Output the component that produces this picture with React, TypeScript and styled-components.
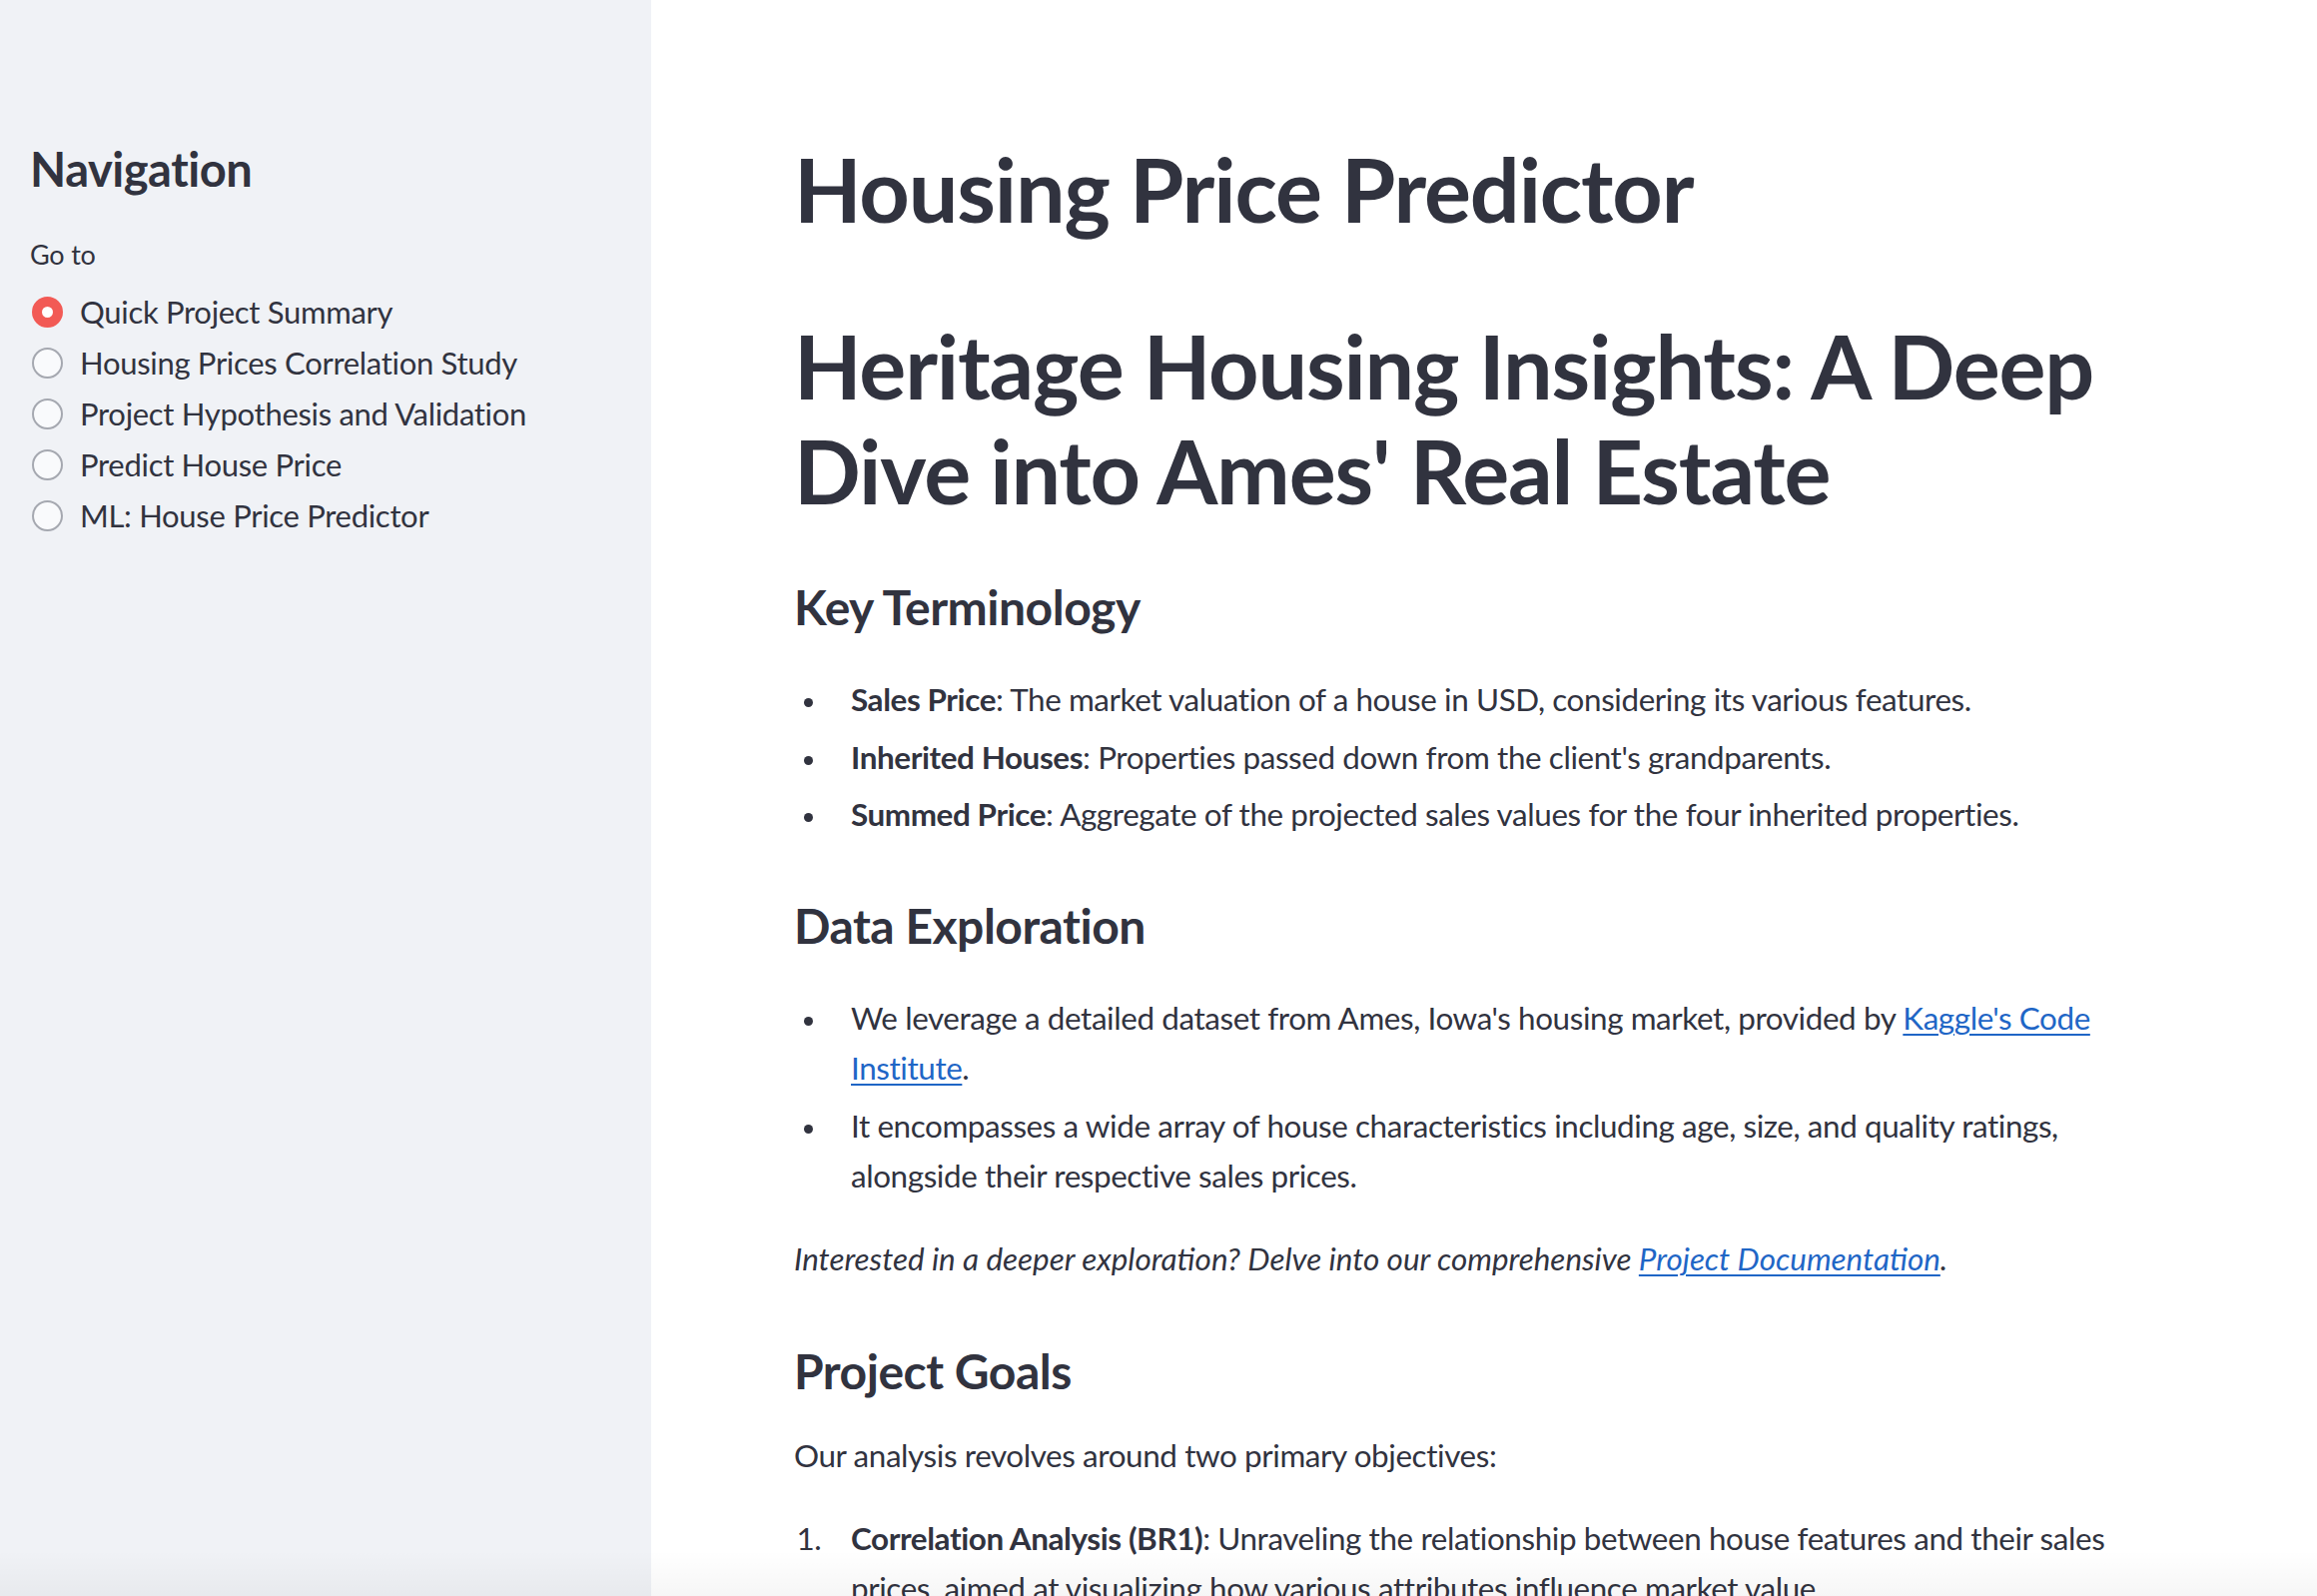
import styled, { createGlobalStyle } from "styled-components";

const pages = [
  "Quick Project Summary",
  "Housing Prices Correlation Study",
  "Project Hypothesis and Validation",
  "Predict House Price",
  "ML: House Price Predictor",
];

const GlobalStyle = createGlobalStyle`
  html, body {
    margin: 0;
    padding: 0;
    background: #ffffff;
  }
  body {
    font-family: Lato, "Noto Sans", sans-serif;
    color: #31333f;
    -webkit-font-smoothing: antialiased;
  }
  * {
    box-sizing: border-box;
  }
`;

export default function App() {
  return (
    <>
      <GlobalStyle />
      <Layout>
        <Sidebar>
          <SideTitle>Navigation</SideTitle>
          <RadioLabel>Go to</RadioLabel>
          <RadioGroup>
            {pages.map((page, i) => (
              <RadioRow key={page}>
                <RadioDot $checked={i === 0} />
                <span>{page}</span>
              </RadioRow>
            ))}
          </RadioGroup>
        </Sidebar>
        <Main>
          <Block>
            <Title>Housing Price Predictor</Title>
            <Title $top={71}>
              Heritage Housing Insights: A Deep Dive into Ames' Real Estate
            </Title>

            <SubHeading $top={54}>Key Terminology</SubHeading>
            <BulletList $top={38}>
              <ListItem>
                <strong>Sales Price</strong>: The market valuation of a house in
                USD, considering its various features.
              </ListItem>
              <ListItem>
                <strong>Inherited Houses</strong>: Properties passed down from
                the client's grandparents.
              </ListItem>
              <ListItem>
                <strong>Summed Price</strong>: Aggregate of the projected sales
                values for the four inherited properties.
              </ListItem>
            </BulletList>

            <SubHeading $top={57}>Data Exploration</SubHeading>
            <BulletList $top={38}>
              <ListItem>
                We leverage a detailed dataset from Ames, Iowa's housing market,
                provided by <Link href="#">Kaggle's Code Institute</Link>.
              </ListItem>
              <ListItem>
                It encompasses a wide array of house characteristics including
                age, size, and quality ratings, alongside their respective sales
                prices.
              </ListItem>
            </BulletList>
            <Paragraph $top={33}>
              <em>
                Interested in a deeper exploration? Delve into our comprehensive{" "}
                <Link href="#">Project Documentation</Link>.
              </em>
            </Paragraph>

            <SubHeading $top={58}>Project Goals</SubHeading>
            <Paragraph $top={30}>
              Our analysis revolves around two primary objectives:
            </Paragraph>
            <NumberList $top={33}>
              <ListItem>
                <strong>Correlation Analysis (BR1)</strong>: Unraveling the
                relationship between house features and their sales prices,
                aimed at visualizing how various attributes influence market
                value.
              </ListItem>
            </NumberList>
          </Block>
        </Main>
        <BottomFade />
      </Layout>
    </>
  );
}

const Layout = styled.div`
  position: relative;
  display: flex;
  height: 100vh;
  overflow: hidden;
`;

const Sidebar = styled.aside`
  width: 652px;
  min-width: 652px;
  height: 100%;
  background: #f0f2f6;
  padding: 141px 30px 0 30px;
`;

const SideTitle = styled.h1`
  margin: 0;
  font-size: 47px;
  line-height: 56px;
  font-weight: 700;
  letter-spacing: -0.01em;
  color: #31333f;
`;

const RadioLabel = styled.div`
  margin-top: 36px;
  font-size: 27px;
  line-height: 44px;
  letter-spacing: -0.2px;
  color: #31333f;
`;

const RadioGroup = styled.div`
  display: flex;
  flex-direction: column;
  gap: 1px;
  margin-top: 10px;
`;

const RadioRow = styled.label`
  display: flex;
  align-items: center;
  gap: 17px;
  height: 50px;
  font-size: 31px;
  letter-spacing: -0.3px;
  color: #31333f;
`;

const RadioDot = styled.span<{ $checked: boolean }>`
  width: 31px;
  height: 31px;
  margin-left: 2px;
  border-radius: 50%;
  flex-shrink: 0;
  background: ${(p) => (p.$checked ? "#ffffff" : "#f9fafc")};
  border: ${(p) => (p.$checked ? "10px solid #f25a55" : "2px solid #a5a8b0")};
`;

const Main = styled.main`
  flex: 1;
  height: 100%;
  background: #ffffff;
  overflow: hidden;
`;

const Block = styled.div`
  width: 1382px;
  margin: 0 auto;
  padding-top: 137px;
`;

const Title = styled.h1<{ $top?: number }>`
  margin: ${(p) => p.$top ?? 0}px 0 0 0;
  font-size: 88px;
  line-height: 1.2;
  font-weight: 700;
  letter-spacing: -1.15px;
  color: #31333f;
`;

const SubHeading = styled.h3<{ $top: number }>`
  margin: ${(p) => p.$top}px 0 0 0;
  font-size: 48px;
  line-height: 58px;
  font-weight: 700;
  letter-spacing: -0.01em;
  color: #31333f;
`;

const BulletList = styled.ul<{ $top: number }>`
  margin: ${(p) => p.$top}px 0 0 0;
  padding-left: 35px;
  font-size: 31.4px;
  line-height: 50.3px;
  letter-spacing: -0.4px;

  li::marker {
    font-size: 28px;
  }
`;

const NumberList = styled.ol<{ $top: number }>`
  margin: ${(p) => p.$top}px 0 0 0;
  padding-left: 35px;
  font-size: 31.4px;
  line-height: 50.3px;
  letter-spacing: -0.4px;
`;

const ListItem = styled.li`
  margin-bottom: 7.5px;
  padding-left: 22px;

  strong {
    font-weight: 700;
  }
`;

const Paragraph = styled.p<{ $top: number }>`
  margin: ${(p) => p.$top}px 0 0 0;
  font-size: 31.4px;
  line-height: 50.3px;
  letter-spacing: -0.4px;

  em {
    letter-spacing: 0;
  }
`;

const Link = styled.a`
  color: #1f66c6;
  text-decoration: underline;
  text-underline-offset: 4px;
  text-decoration-thickness: 2px;
`;

const BottomFade = styled.div`
  position: absolute;
  left: 0;
  right: 0;
  bottom: 0;
  height: 46px;
  pointer-events: none;
  background: linear-gradient(
    to bottom,
    rgba(0, 0, 0, 0),
    rgba(0, 0, 0, 0.035)
  );
`;
